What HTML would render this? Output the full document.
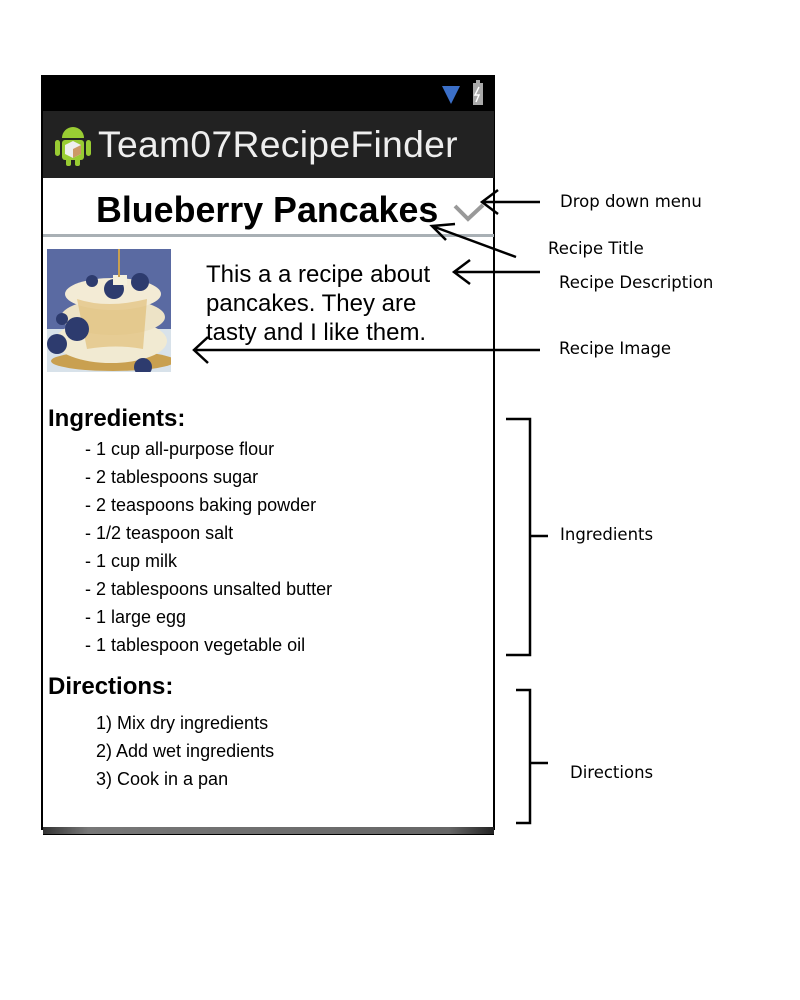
<!DOCTYPE html>
<html><head><style>
body{margin:0;width:800px;height:1000px;background:#fff;position:relative;font-family:"Liberation Sans",sans-serif;overflow:hidden}
.a{position:absolute;white-space:nowrap}
.phone{left:41px;top:75px;width:450px;height:753px;border:2px solid #000;border-bottom:none;background:#fff}
.status{left:43px;top:77px;width:451px;height:34px;background:#000}
.bar{left:43px;top:111px;width:451px;height:67px;background:#222}
.apptitle{left:98px;top:123px;color:#eee;font-size:37.3px;letter-spacing:0.3px}
.title{left:96px;top:190px;font-size:35.8px;font-weight:bold}
.sep{left:43px;top:234px;width:451px;height:3px;background:#a9b0b5}
.desc{left:206px;top:260px;font-size:24px;line-height:29px}
h2{position:absolute;margin:0;font-size:24px;font-weight:bold;left:48px}
.list{font-size:18px;line-height:28px}
.note{font-family:"DejaVu Sans",sans-serif;font-size:16.5px}
.bottom{left:43px;top:827px;width:451px;height:7px;background:linear-gradient(90deg,#333,#777 10%,#666 90%,#222);border-bottom:1px solid #000}
</style></head><body>
<div class="a phone"></div>
<div class="a status"></div>
<svg class="a" style="left:440px;top:80px" width="50" height="28"><polygon points="2,6 20,6 11,24" fill="#3b6fc8"/><rect x="33" y="3" width="10" height="22" fill="#aaa"/><rect x="36" y="0" width="4" height="4" fill="#aaa"/><path d="M39 7 L35 15 L39 15 L36 22" stroke="#fff" fill="none" stroke-width="1.5"/></svg>
<div class="a bar"></div>
<svg class="a" style="left:52px;top:122px" width="42" height="46"><rect x="3" y="18" width="5" height="16" rx="2.5" fill="#9c3"/><rect x="34" y="18" width="5" height="16" rx="2.5" fill="#9c3"/><path d="M10 16 A11 11 0 0 1 32 16 Z" fill="#9c3"/><rect x="10" y="18" width="22" height="20" rx="3" fill="#9c3"/><rect x="14" y="36" width="5" height="8" rx="2" fill="#9c3"/><rect x="23" y="36" width="5" height="8" rx="2" fill="#9c3"/><polygon points="21,19 29,23 29,32 21,36 13,32 13,23" fill="#eee"/><polygon points="21,27 29,23 29,32 21,36" fill="#c96"/></svg>
<div class="a apptitle">Team07RecipeFinder</div>
<div class="a title">Blueberry Pancakes</div>
<svg class="a" style="left:452px;top:200px" width="36" height="24"><path d="M3 6 L16 19 L31 5" stroke="#999" stroke-width="4" fill="none"/></svg>
<div class="a sep"></div>
<svg class="a" style="left:47px;top:249px" width="124" height="123">
<rect width="124" height="123" fill="#5a6aa2"/>
<rect y="80" width="124" height="43" fill="#d8e2ea"/>
<ellipse cx="66" cy="112" rx="62" ry="10" fill="#c9a050"/>
<ellipse cx="64" cy="92" rx="56" ry="22" fill="#f1ead2"/>
<ellipse cx="66" cy="68" rx="52" ry="18" fill="#ede3c6"/>
<ellipse cx="66" cy="45" rx="48" ry="16" fill="#f3ebd5"/>
<path d="M30 50 Q60 60 100 50 L96 100 Q70 95 40 100Z" fill="#d9a94a" opacity=".45"/>
<circle cx="67" cy="40" r="10" fill="#2d3b6e"/><circle cx="93" cy="33" r="9" fill="#2d3b6e"/><circle cx="45" cy="32" r="6" fill="#2d3b6e"/><circle cx="30" cy="80" r="12" fill="#2d3b6e"/><circle cx="10" cy="95" r="10" fill="#2d3b6e"/><circle cx="15" cy="70" r="6" fill="#2d3b6e"/><circle cx="96" cy="118" r="9" fill="#2d3b6e"/>
<rect x="66" y="26" width="14" height="10" fill="#f5f0dc"/><rect x="71" y="0" width="2" height="28" fill="#c9a050"/>
</svg>
<div class="a desc">This a a recipe about<br>pancakes. They are<br>tasty and I like them.</div>
<h2 style="top:405px">Ingredients:</h2>
<div class="a list" style="left:85px;top:435px">- 1 cup all-purpose flour<br>- 2 tablespoons sugar<br>- 2 teaspoons baking powder<br>- 1/2 teaspoon salt<br>- 1 cup milk<br>- 2 tablespoons unsalted butter<br>- 1 large egg<br>- 1 tablespoon vegetable oil</div>
<h2 style="top:673px">Directions:</h2>
<div class="a list" style="left:96px;top:709px">1) Mix dry ingredients<br>2) Add wet ingredients<br>3) Cook in a pan</div>
<div class="a bottom"></div>
<svg class="a" style="left:0;top:0" width="800" height="1000" fill="none" stroke="#000" stroke-width="2.5">
<path d="M540 202 H482 M498 190 L482 202 L498 214"/>
<path d="M516 257 L432 226 M455 224 L432 226 L446 240"/>
<path d="M540 272 H454 M470 260 L454 272 L470 284"/>
<path d="M540 350 H194 M208 337 L194 350 L208 363"/>
<path d="M506 419 H530 V655 H506 M530 536 H548"/>
<path d="M516 690 H530 V823 H516 M530 763 H548"/>
</svg>
<div class="a note" style="left:560px;top:192px">Drop down menu</div>
<div class="a note" style="left:548px;top:239px">Recipe Title</div>
<div class="a note" style="left:559px;top:273px">Recipe Description</div>
<div class="a note" style="left:559px;top:339px">Recipe Image</div>
<div class="a note" style="left:560px;top:525px">Ingredients</div>
<div class="a note" style="left:570px;top:763px">Directions</div>
</body></html>
